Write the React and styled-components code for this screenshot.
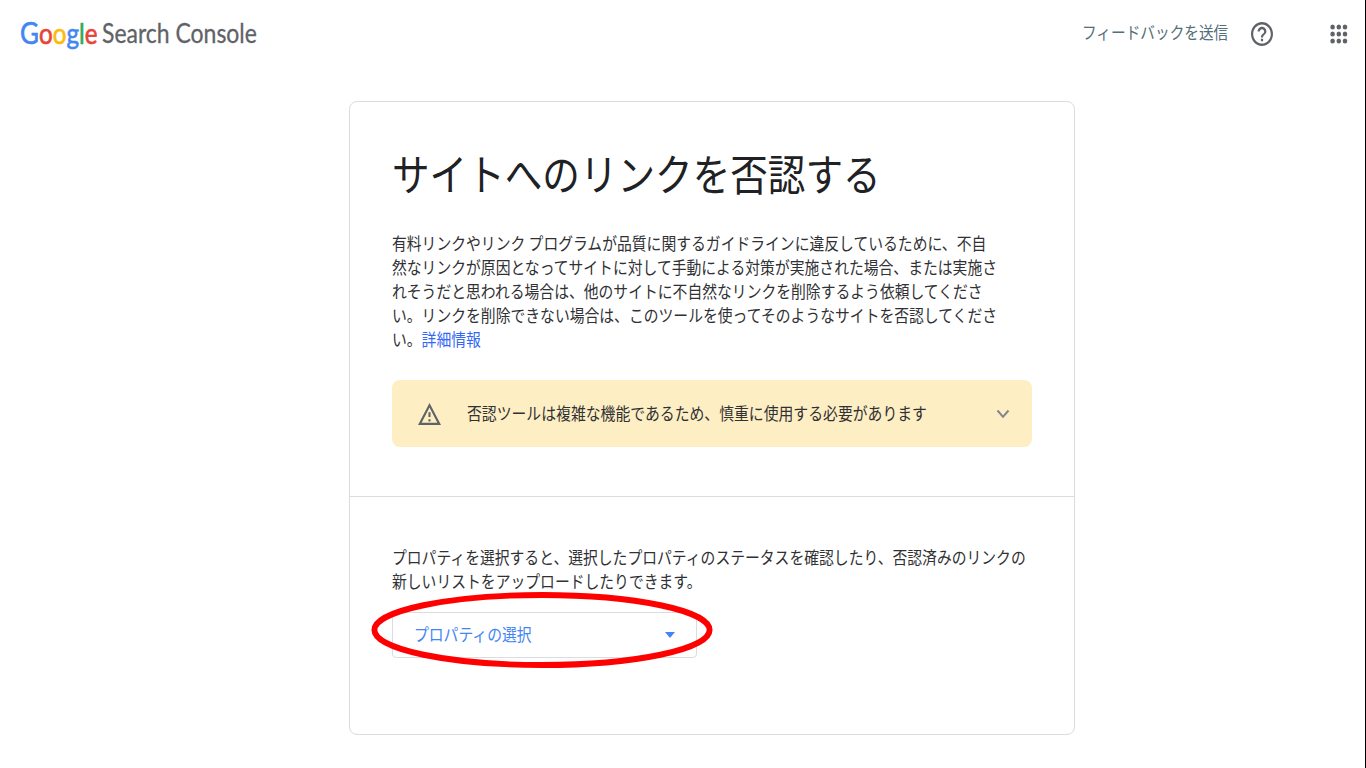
import styled, { createGlobalStyle } from 'styled-components'

const GlobalStyle = createGlobalStyle`
    * {
        box-sizing: border-box;
    }

    body {
        margin: 0;
        background-color: #fff;
        font-family: Roboto, "Noto Sans CJK JP", sans-serif;
        overflow: hidden;
    }
`

const Page = styled.div`
    width: 1366px;
    height: 768px;
    background-color: #fff;
    border-right: 1px solid #000;
    overflow: hidden;
`

const Header = styled.header`
    height: 101px;
    padding: 0 17px 0 20px;
    display: flex;
    align-items: flex-start;
    justify-content: space-between;
`

const Logo = styled.div`
    height: 67px;
    display: flex;
    align-items: center;
`

const Brand = styled.span`
    width: 82px;
    padding-bottom: 3px;
    font-family: Lato, sans-serif;
    font-size: 28px;
    line-height: 64px;
    white-space: nowrap;
    -webkit-text-stroke: 0.6px;
    transform: scaleX(0.865);
    transform-origin: left center;
`

const Letter = styled.span`
    color: ${props => props.$color};
    font-size: ${props => props.$size || 28}px;
`

const Product = styled.span`
    font-family: Lato, sans-serif;
    font-size: 26px;
    line-height: 67px;
    color: #5f6368;
    white-space: nowrap;
    -webkit-text-stroke: 0.3px;
    transform: scaleX(0.883);
    transform-origin: left center;
`

const Actions = styled.div`
    height: 67px;
    display: flex;
    align-items: center;
`

const Line = styled.span`
    display: block;
    white-space: nowrap;
    transform: scaleX(${props => props.$scale || 0.871});
    transform-origin: left center;
`

const Feedback = styled.div`
    width: 169px;
    font-family: "Noto Sans CJK JP", sans-serif;
    font-size: 17px;
    line-height: 24px;
    color: #546e7a;
    padding-bottom: 4px;
`

const IconSvg = styled.svg`
    display: block;
    flex: none;
`

const AppsSvg = styled(IconSvg)`
    margin-left: 57px;
`

const Card = styled.main`
    width: 726px;
    height: 634px;
    margin-left: 349px;
    border: 1px solid #dadce0;
    border-radius: 8px;
    font-family: "Noto Sans CJK JP", sans-serif;
    color: #303134;
`

const Intro = styled.section`
    height: 395px;
    padding: 40px 42px 0;
    border-bottom: 1px solid #dadce0;
`

const Title = styled.h1`
    margin: 0;
    font-size: 43px;
    font-weight: 400;
    line-height: 60px;
    color: #202124;
`

const Text = styled.p`
    margin: ${props => props.$top || 0}px 0 0;
    font-size: 17px;
    line-height: 24px;
`

const Link = styled.a`
    color: #3367f6;
`

const Warning = styled.div`
    height: 67px;
    margin-top: 29px;
    padding: 0 22px 0 26px;
    display: flex;
    align-items: center;
    background-color: #feeec3;
    border-radius: 8px;
`

const WarningText = styled.div`
    width: 529px;
    margin-left: 26px;
    font-size: 17px;
    line-height: 24px;
    padding-bottom: 2px;
`

const Property = styled.section`
    padding: 48px 42px 0;
`

const Select = styled.div`
    position: relative;
    width: 305px;
    height: 46px;
    margin-top: 19px;
    padding: 0 21px 3px 21px;
    display: flex;
    align-items: center;
    justify-content: space-between;
    border: 1px solid #dadce0;
    border-radius: 4px;
    font-size: 17px;
    line-height: 24px;
    color: #4285f4;
`

const Arrow = styled(IconSvg)`
    margin-top: 3px;
`

const Highlight = styled.svg`
    position: absolute;
    left: -22px;
    top: -21px;
    overflow: visible;
`

const brand = [
    { id: 1, char: 'G', color: '#4285f4', size: 30 },
    { id: 2, char: 'o', color: '#ea4335' },
    { id: 3, char: 'o', color: '#fbbc04' },
    { id: 4, char: 'g', color: '#4285f4' },
    { id: 5, char: 'l', color: '#34a853' },
    { id: 6, char: 'e', color: '#ea4335' },
]

const introLines = [
    '有料リンクやリンク プログラムが品質に関するガイドラインに違反しているために、不自',
    '然なリンクが原因となってサイトに対して手動による対策が実施された場合、または実施さ',
    'れそうだと思われる場合は、他のサイトに不自然なリンクを削除するよう依頼してくださ',
    'い。リンクを削除できない場合は、このツールを使ってそのようなサイトを否認してくださ',
]

const propertyLines = [
    'プロパティを選択すると、選択したプロパティのステータスを確認したり、否認済みのリンクの',
    '新しいリストをアップロードしたりできます。',
]

const HelpIcon = () => (
    <IconSvg width='22' height='24' viewBox='2 2 20 20' preserveAspectRatio='none' fill='#5f6368'>
        <path d='M11 18h2v-2h-2v2zm1-16C6.48 2 2 6.48 2 12s4.48 10 10 10 10-4.48 10-10S17.52 2 12 2zm0 18c-4.41 0-8-3.59-8-8s3.59-8 8-8 8 3.59 8 8-3.59 8-8 8zm0-14c-2.21 0-4 1.79-4 4h2c0-1.1.9-2 2-2s2 .9 2 2c0 2-3 1.75-3 5h2c0-2.25 3-2.5 3-5 0-2.21-1.79-4-4-4z' />
    </IconSvg>
)

const AppsIcon = () => (
    <AppsSvg width='18' height='20' viewBox='0 0 18 20' fill='#5f6368'>
        {[3, 10, 17].map(y => [2.6, 8.8, 15].map(x => (
            <ellipse key={`${x}-${y}`} cx={x} cy={y} rx='2.3' ry='2.5' />
        )))}
    </AppsSvg>
)

const WarningIcon = () => (
    <IconSvg width='23' height='22' viewBox='1 2 22 19' preserveAspectRatio='none' fill='#5f6368'>
        <path d='M12 5.99 19.53 19H4.47L12 5.99M12 2 1 21h22L12 2zm1 14h-2v2h2v-2zm0-6h-2v4h2v-4z' />
    </IconSvg>
)

const App = () => {
    return (
        <>
            <GlobalStyle />
            <Page>
                <Header>
                    <Logo>
                        <Brand>
                            {brand.map(item => (
                                <Letter key={item.id} $color={item.color} $size={item.size}>{item.char}</Letter>
                            ))}
                        </Brand>
                        <Product>Search Console</Product>
                    </Logo>
                    <Actions>
                        <Feedback><Line $scale={0.862}>フィードバックを送信</Line></Feedback>
                        <HelpIcon />
                        <AppsIcon />
                    </Actions>
                </Header>
                <Card>
                    <Intro>
                        <Title><Line $scale={0.874}>サイトへのリンクを否認する</Line></Title>
                        <Text $top={29}>
                            {introLines.map(line => (
                                <Line key={line}>{line}</Line>
                            ))}
                            <Line>い。<Link>詳細情報</Link></Line>
                        </Text>
                        <Warning>
                            <WarningIcon />
                            <WarningText>
                                <Line $scale={0.873}>否認ツールは複雑な機能であるため、慎重に使用する必要があります</Line>
                            </WarningText>
                            <IconSvg width='14' height='10' viewBox='0 0 14 10' fill='none' stroke='#80868b' strokeWidth='2'>
                                <path d='M1.5 1.5 7 7.8l5.5-6.3' />
                            </IconSvg>
                        </Warning>
                    </Intro>
                    <Property>
                        <Text>
                            {propertyLines.map(line => (
                                <Line key={line}>{line}</Line>
                            ))}
                        </Text>
                        <Select>
                            <Line>プロパティの選択</Line>
                            <Arrow width='10' height='6' viewBox='0 0 10 6' fill='#4285f4'>
                                <path d='M0 0h10L5 6z' />
                            </Arrow>
                            <Highlight width='342' height='76' viewBox='0 0 342 76' fill='none'>
                                <ellipse cx='171' cy='38' rx='167.6' ry='35' stroke='#ff0000' strokeWidth='5.9' />
                            </Highlight>
                        </Select>
                    </Property>
                </Card>
            </Page>
        </>
    )
}

export default App
